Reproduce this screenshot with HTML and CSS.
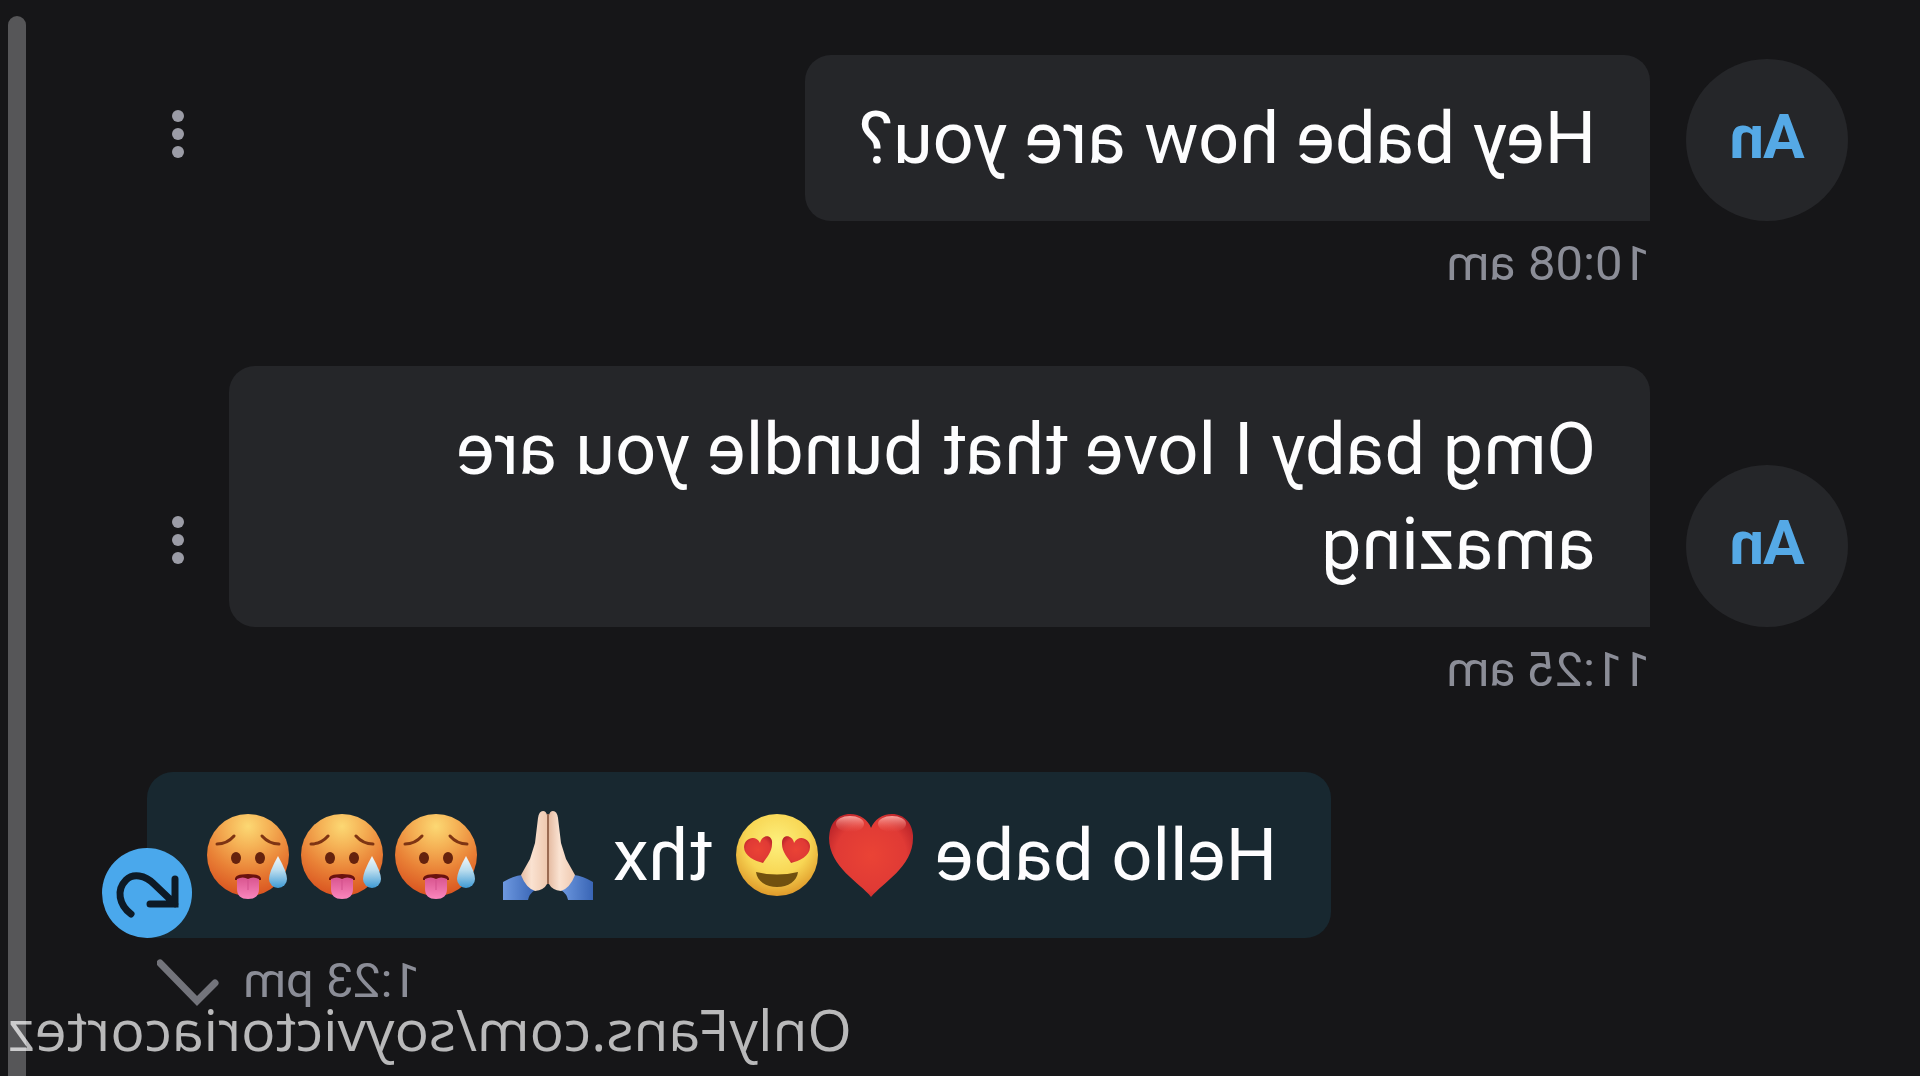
FILE: index.html
```html
<!DOCTYPE html>
<html lang="en">
<head>
<meta charset="utf-8">
<title>Messages</title>
<link rel="stylesheet" href="styles.css">
</head>
<body>
<svg class="symbols" aria-hidden="true">
  <defs>
    <radialGradient id="hot" cx="50%" cy="15%" r="85%"><stop offset="0" stop-color="#fcd873"/><stop offset=".3" stop-color="#f5b256"/><stop offset=".65" stop-color="#e98136"/><stop offset="1" stop-color="#d95420"/></radialGradient>
    <radialGradient id="yellow" cx="50%" cy="35%" r="65%"><stop offset="0" stop-color="#fdf07d"/><stop offset=".6" stop-color="#f8d654"/><stop offset="1" stop-color="#df9a2a"/></radialGradient>
    <radialGradient id="red" cx="50%" cy="50%" r="60%"><stop offset="0" stop-color="#ea4335"/><stop offset=".7" stop-color="#e03a35"/><stop offset="1" stop-color="#b92329"/></radialGradient>
    <linearGradient id="shine" x1="0" y1="0" x2="0" y2="1"><stop offset="0" stop-color="#ffb3ad" stop-opacity=".9"/><stop offset="1" stop-color="#f06a60" stop-opacity="0"/></linearGradient>
    <linearGradient id="drop" x1="0" y1="0" x2="0" y2="1"><stop offset="0" stop-color="#f3f8fa"/><stop offset=".45" stop-color="#b9dcee"/><stop offset="1" stop-color="#3e9ad4"/></linearGradient>
    <linearGradient id="skin" x1="0" y1="0" x2="1" y2="0"><stop offset="0" stop-color="#efc9b0"/><stop offset=".6" stop-color="#fae2d1"/><stop offset="1" stop-color="#e6bda4"/></linearGradient>
    <linearGradient id="sleeve" x1="0" y1="0" x2="1" y2="0"><stop offset="0" stop-color="#3965b5"/><stop offset="1" stop-color="#6d98df"/></linearGradient>
    <linearGradient id="tongue" x1="0" y1="0" x2="0" y2="1"><stop offset="0" stop-color="#d9558f"/><stop offset="1" stop-color="#fa86bd"/></linearGradient>
  </defs>
  <symbol id="hot-face" viewBox="0 0 94 90">
    <circle cx="47" cy="45" r="41" fill="url(#hot)"/>
    <path d="M16 34Q26 34 33 26M61 26Q68 34 78 34" fill="none" stroke="#7e3413" stroke-width="3" stroke-linecap="round"/>
    <ellipse cx="35" cy="48" rx="5" ry="6" fill="#65220d"/><ellipse cx="59" cy="48" rx="5" ry="6" fill="#65220d"/>
    <path d="M34 70Q33 64 47 64Q61 64 60 70Z" fill="#6a120e"/>
    <path d="M36 69Q42 66 47 69Q52 66 58 69V79Q58 89 47 89Q36 89 36 79Z" fill="url(#tongue)"/>
    <path d="M47 70V80" stroke="#d2508c" stroke-width="1"/>
    <path d="M17 46Q26 62 26 69A9 9 0 0 1 8 69Q8 62 17 46Z" fill="url(#drop)"/>
  </symbol>
  <symbol id="heart" viewBox="0 0 94 90">
    <path d="M47 87C36 73 5 57 5 28C5 13 14 4 26 4C36 4 44 10 47 18C50 10 58 4 68 4C80 4 89 13 89 28C89 57 58 73 47 87Z" fill="url(#red)"/>
    <ellipse cx="26" cy="14" rx="14" ry="8" fill="url(#shine)"/><ellipse cx="68" cy="14" rx="14" ry="8" fill="url(#shine)"/>
  </symbol>
  <symbol id="heart-eyes" viewBox="0 0 94 90">
    <circle cx="47" cy="45" r="41" fill="url(#yellow)"/>
    <path d="M33 53C25 51 14 46 14 37C14 28 26 24 30 33C32 24 43 24 42 34C42 42 36 48 33 53Z" fill="url(#red)"/>
    <path d="M61 53C69 51 80 46 80 37C80 28 68 24 64 33C62 24 51 24 52 34C52 42 58 48 61 53Z" fill="url(#red)"/>
    <path d="M26 62Q47 67 68 62C67 71 58 77 47 77C36 77 27 71 26 62Z" fill="#71500f"/>
  </symbol>
  <symbol id="hands" viewBox="0 0 94 90">
    <path d="M2 72Q12 66 21 65L34 80Q28 84 27 90H2Z" fill="url(#sleeve)"/>
    <path d="M92 72Q82 66 73 65L60 80Q66 84 67 90H92Z" fill="url(#sleeve)"/>
    <path d="M46 74V5Q45 1 42 1Q38 1 37 8L34 33L29 49L20 65Q25 78 34 81Q43 80 46 74Z" fill="url(#skin)"/>
    <path d="M48 74V5Q49 1 52 1Q56 1 57 8L60 33L65 49L74 65Q69 78 60 81Q51 80 48 74Z" fill="url(#skin)"/>
    <path d="M47 4V74" stroke="#9a6a52" stroke-width="2"/>
  </symbol>
</svg>

<main class="chat">
  <ol class="messages">
    <li class="message">
      <div class="avatar">An</div>
      <div class="body">
        <div class="line">
          <p class="bubble">Hey babe how are you?</p>
          <button class="more" type="button" aria-label="More"><i></i><i></i><i></i></button>
        </div>
        <div class="meta"><time>10:08 am</time></div>
      </div>
    </li>
    <li class="message">
      <div class="avatar">An</div>
      <div class="body">
        <div class="line">
          <p class="bubble">Omg baby I love that bundle you are amazing</p>
          <button class="more" type="button" aria-label="More"><i></i><i></i><i></i></button>
        </div>
        <div class="meta"><time>11:25 am</time></div>
      </div>
    </li>
    <li class="message own">
      <div class="body">
        <div class="line">
          <p class="bubble">Hello babe <svg class="emoji" role="img" aria-label="red heart"><use href="#heart"/></svg><svg class="emoji" role="img" aria-label="heart eyes"><use href="#heart-eyes"/></svg> thx <svg class="emoji" role="img" aria-label="folded hands"><use href="#hands"/></svg> <svg class="emoji" role="img" aria-label="hot face"><use href="#hot-face"/></svg><svg class="emoji" role="img" aria-label="hot face"><use href="#hot-face"/></svg><svg class="emoji" role="img" aria-label="hot face"><use href="#hot-face"/></svg></p>
          <button class="resend" type="button" aria-label="Send again">
            <svg viewBox="0 0 90 90"><path d="M17 31V56H42M17 56L38 36C47 27 59 25 66 32C76 42 73 57 61 66"/></svg>
          </button>
        </div>
        <div class="meta"><time>1:23 pm</time>
          <svg class="check" viewBox="0 0 64 48" role="img" aria-label="Sent"><path d="M6 24L24 42L61 4"/></svg>
        </div>
      </div>
    </li>
  </ol>
  <div class="scrollbar"></div>
  <a class="watermark" href="#">OnlyFans.com/soyvictoriacortez</a>
</main>
</body>
</html>
```

FILE: styles.css
```css
* {
  box-sizing: border-box;
}

body {
  margin: 0;
  background: #161618;
  color: #fdfdfe;
  font-family: Roboto, "Liberation Sans", sans-serif;
}

.symbols {
  position: absolute;
  width: 0;
  height: 0;
}

/* The whole conversation is shown flipped, as in a front camera. */
.chat {
  position: relative;
  height: 100vh;
  overflow: hidden;
  transform: scaleX(-1);
}

.messages {
  display: flex;
  flex-direction: column;
  gap: 74px;
  margin: 0;
  padding: 55px 147px 0 72px;
  list-style: none;
}

.message {
  display: flex;
  align-items: flex-end;
  gap: 36px;
}

.avatar {
  display: flex;
  flex: none;
  align-items: center;
  justify-content: center;
  width: 162px;
  height: 162px;
  margin-bottom: 71px;
  padding-bottom: 6px;
  border-radius: 50%;
  background: #252629;
  color: #55a9e6;
  font-size: 62px;
  font-weight: bold;
  line-height: 76px;
}

.body {
  flex: 1;
}

.line {
  position: relative;
  display: flex;
  align-items: flex-end;
  justify-content: space-between;
  gap: 20px;
}

.bubble {
  margin: 0;
  padding: 36px 54px 35px;
  border-radius: 26px 26px 26px 0;
  background: #252629;
  font-size: 72px;
  line-height: 95px;
}

.own .line {
  justify-content: flex-end;
}

.own .bubble {
  border-radius: 26px 26px 0 26px;
  background: #182830;
}

.emoji {
  width: 94px;
  height: 90px;
  margin: -20px 0;
  vertical-align: 0;
}

button {
  padding: 0;
  border: 0;
  background: none;
}

.more {
  display: flex;
  flex: none;
  flex-direction: column;
  align-items: center;
  justify-content: center;
  gap: 6px;
  width: 62px;
  height: 174px;
}

.more i {
  width: 12px;
  height: 12px;
  border-radius: 50%;
  background: #9b9ca6;
}

.line .more {
  margin-top: -8px;
}

.resend {
  position: absolute;
  right: -45px;
  bottom: 0;
  width: 90px;
  height: 90px;
  border-radius: 50%;
  background: #4aa8ec;
}

.resend svg {
  display: block;
}

.resend path {
  fill: none;
  stroke: #0d1a26;
  stroke-width: 7;
  stroke-linecap: round;
}

.meta {
  display: flex;
  margin-top: 15px;
  color: #8b8d97;
  font-size: 49px;
  line-height: 56px;
}

.own .meta {
  justify-content: flex-end;
  gap: 22px;
  padding-right: 10px;
}

.check {
  width: 64px;
  height: 48px;
  margin-top: 6px;
}

.check path {
  fill: none;
  stroke: #73747b;
  stroke-width: 7;
  stroke-linecap: round;
}

.scrollbar {
  position: absolute;
  top: 16px;
  right: 8px;
  bottom: -16px;
  width: 18px;
  border-radius: 9px;
  background: #565658;
}

.watermark {
  position: absolute;
  right: 8px;
  bottom: 11px;
  color: #fff;
  opacity: 0.7;
  font: 57px/72px "Open Sans", sans-serif;
  text-decoration: none;
}
```
